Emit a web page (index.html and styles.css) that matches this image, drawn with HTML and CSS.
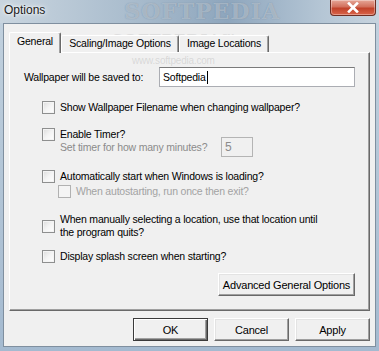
FILE: index.html
```html
<!DOCTYPE html>
<html lang="en">
<head>
  <meta charset="UTF-8" />
  <title>Options</title>
  <link rel="stylesheet" href="styles.css">
</head>
<body>
  <div class="window">
    <div class="titlebar">
      <span class="title">Options</span>
      <span class="mark-big">SOFTPEDIA</span>
      <button class="close" aria-label="Close">
        <svg width="14" height="11" viewBox="0 0 14 11"><path d="M3 1.5 L11 9.5 M11 1.5 L3 9.5" stroke="#fff" stroke-width="2.6" stroke-linecap="square"/></svg>
      </button>
    </div>

    <div class="client">
      <span class="mark-small">SOFTPEDIA&trade;</span>
      <span class="mark-url">www.softpedia.com</span>

      <div class="tabs">
        <div class="tab active tab-general">General</div>
        <div class="tab tab-scaling">Scaling/Image Options</div>
        <div class="tab tab-locations">Image Locations</div>
      </div>

      <div class="panel">
        <div class="save-row">
          <label class="save-label">Wallpaper will be saved to:</label>
          <div class="textbox">Softpedia<span class="caret"></span></div>
        </div>

        <div class="opt opt-show">
          <span class="check"></span>
          <span>Show Wallpaper Filename when changing wallpaper?</span>
        </div>

        <div class="opt opt-timer">
          <span class="check"></span>
          <span>Enable Timer?</span>
        </div>
        <div class="sub-row">
          <span class="muted">Set timer for how many minutes?</span>
          <div class="spin">5</div>
        </div>

        <div class="opt opt-auto">
          <span class="check"></span>
          <span>Automatically start when Windows is loading?</span>
        </div>
        <div class="opt sub-opt">
          <span class="check disabled"></span>
          <span class="disabled-text">When autostarting, run once then exit?</span>
        </div>

        <div class="opt opt-manual">
          <span class="check"></span>
          <span>When manually selecting a location, use that location until<br>the program quits?</span>
        </div>

        <div class="opt opt-splash">
          <span class="check"></span>
          <span>Display splash screen when starting?</span>
        </div>

        <div class="advanced-row">
          <button class="btn btn-advanced">Advanced General Options</button>
        </div>
      </div>

      <div class="buttons">
        <button class="btn btn-default">OK</button>
        <button class="btn">Cancel</button>
        <button class="btn">Apply</button>
      </div>
    </div>
  </div>
</body>
</html>
```

FILE: styles.css
```css
:root {
  --face: #f0f0f0;
  --shadow: #a0a0a0;
  --dark: #696969;
  --font: 'Liberation Sans', Arial, sans-serif;
}

body {
  margin: 0;
  font-family: var(--font);
  font-size: 10.5px;
  letter-spacing: -0.2px;
  color: #000;
  overflow: hidden;
}

.window {
  width: 379px;
  height: 351px;
  background: linear-gradient(180deg, #c3d2df 0%, #b6c8d8 40%, #a4bad0 100%);
  display: flex;
  flex-direction: column;
  overflow: hidden;
}

.titlebar {
  position: relative;
  height: 23px;
  display: flex;
  align-items: center;
  padding-left: 4px;
  background: linear-gradient(90deg, #c9d5df 0%, #a9bccd 35%, #8ea6bd 60%, #b5c6d5 85%, #c7d3de 100%);
}

.title {
  font-size: 12px;
  letter-spacing: 0;
  color: #1a1a1a;
  margin-top: -3px;
  text-shadow: 0 0 6px #fff, 0 0 3px #fff;
}

.mark-big {
  position: absolute;
  left: 124px;
  top: 0;
  font-family: 'DejaVu Serif', serif;
  font-weight: bold;
  font-size: 22px;
  line-height: 22px;
  letter-spacing: 1px;
  color: rgba(225, 234, 242, 0.45);
  text-shadow: 0 0 1px rgba(80, 100, 120, 0.5);
}

.close {
  position: absolute;
  right: 3px;
  top: 0;
  width: 46px;
  height: 16px;
  padding: 0;
  border: 1px solid #6e2d22;
  border-top: none;
  border-radius: 0 0 4px 4px;
  background: linear-gradient(180deg, #e6a798 0%, #d2705c 45%, #c1422a 55%, #d9644a 100%);
  box-shadow: inset 0 0 0 1px rgba(255, 255, 255, 0.35);
  display: flex;
  align-items: center;
  justify-content: center;
}

.client {
  position: relative;
  margin: 0 3px 4px 3px;
  height: 324px;
  box-sizing: border-box;
  background: var(--face);
  border: 1px solid #7f8f9f;
  padding: 8px 0 0 5px;
}

.mark-small {
  position: absolute;
  left: 108px;
  top: 7px;
  font-family: 'DejaVu Serif', serif;
  font-size: 15px;
  font-weight: bold;
  color: rgba(190, 190, 190, 0.35);
  letter-spacing: 1px;
}

.mark-url {
  position: absolute;
  left: 128px;
  top: 31px;
  font-size: 10px;
  color: rgba(170, 170, 170, 0.35);
}

.tabs {
  position: relative;
  z-index: 1;
  display: flex;
  align-items: flex-end;
  height: 20px;
}

.tab {
  height: 17px;
  box-sizing: border-box;
  border-top: 1px solid #fff;
  border-left: 1px solid #fff;
  border-right: 1px solid var(--dark);
  box-shadow: inset -1px 0 0 var(--shadow);
  border-radius: 2px 2px 0 0;
  background: var(--face);
  text-align: center;
  line-height: 15px;
  white-space: nowrap;
}

.tab.active {
  height: 21px;
  margin-bottom: -1px;
  line-height: 17px;
}

.tab-general { width: 52px; }
.tab-scaling { width: 118px; }
.tab-locations { width: 90px; }

.panel {
  width: 361px;
  height: 259px;
  box-sizing: border-box;
  border-top: 1px solid #fff;
  border-left: 1px solid #fff;
  border-right: 1px solid var(--dark);
  border-bottom: 1px solid var(--dark);
  box-shadow: inset -1px -1px 0 var(--shadow);
  padding: 14px 13px 0 14px;
}

.save-row {
  display: flex;
  align-items: center;
  height: 20px;
}

.save-label {
  width: 135px;
}

.textbox {
  width: 196px;
  height: 20px;
  box-sizing: border-box;
  background: #fff;
  border: 1px solid #abadb3;
  border-top-color: #7a7a7a;
  padding: 0 3px;
  line-height: 18px;
  display: flex;
  align-items: center;
}

.caret {
  display: inline-block;
  width: 1px;
  height: 13px;
  background: #000;
  margin-left: 1px;
}

.opt {
  display: flex;
  align-items: center;
  padding-left: 18px;
  line-height: 13px;
}

.opt .check {
  margin-right: 5px;
}

.opt-show { margin-top: 14px; }
.opt-timer { margin-top: 14px; }
.opt-auto { margin-top: 13px; }
.opt-manual { margin-top: 15px; }
.opt-splash { margin-top: 11px; }

.sub-opt {
  margin-top: 2px;
  padding-left: 34px;
}

.check {
  flex: none;
  width: 13px;
  height: 13px;
  box-sizing: border-box;
  border: 1px solid #8e8f8f;
  background: linear-gradient(135deg, #dcdcdc 0%, #f4f4f4 50%, #fff 100%);
  box-shadow: inset 0 0 0 1px #f4f4f4;
}

.check.disabled {
  border-color: #b1b1b1;
  background: #f4f4f4;
  box-shadow: none;
}

.sub-row {
  display: flex;
  align-items: center;
  height: 20px;
  margin-top: -4px;
  padding-left: 36px;
}

.muted {
  color: #8b8b8b;
  white-space: nowrap;
}

.disabled-text {
  color: #a3a3a3;
}

.spin {
  width: 32px;
  height: 20px;
  box-sizing: border-box;
  margin-left: auto;
  margin-right: 103px;
  border: 1px solid #b4b4b4;
  background: var(--face);
  color: #8b8b8b;
  padding-left: 3px;
  line-height: 18px;
  font-size: 12px;
}

.advanced-row {
  display: flex;
  justify-content: flex-end;
  margin-top: 10px;
  padding-right: 1px;
}

.btn {
  width: 75px;
  height: 23px;
  box-sizing: border-box;
  font-family: var(--font);
  font-size: 11px;
  letter-spacing: -0.2px;
  color: #000;
  background: var(--face);
  border: 1px solid;
  border-color: #fff var(--dark) var(--dark) #fff;
  box-shadow: inset -1px -1px 0 var(--shadow), inset 1px 1px 0 #e3e3e3;
  padding: 0;
}

.btn-advanced {
  width: 137px;
}

.btn-default {
  border-color: #3a3a3a;
  box-shadow: inset 1px 1px 0 #fff, inset -1px -1px 0 var(--dark), inset -2px -2px 0 var(--shadow);
}

.buttons {
  display: flex;
  justify-content: flex-end;
  gap: 6px;
  width: 361px;
  margin-top: 7px;
}
```
